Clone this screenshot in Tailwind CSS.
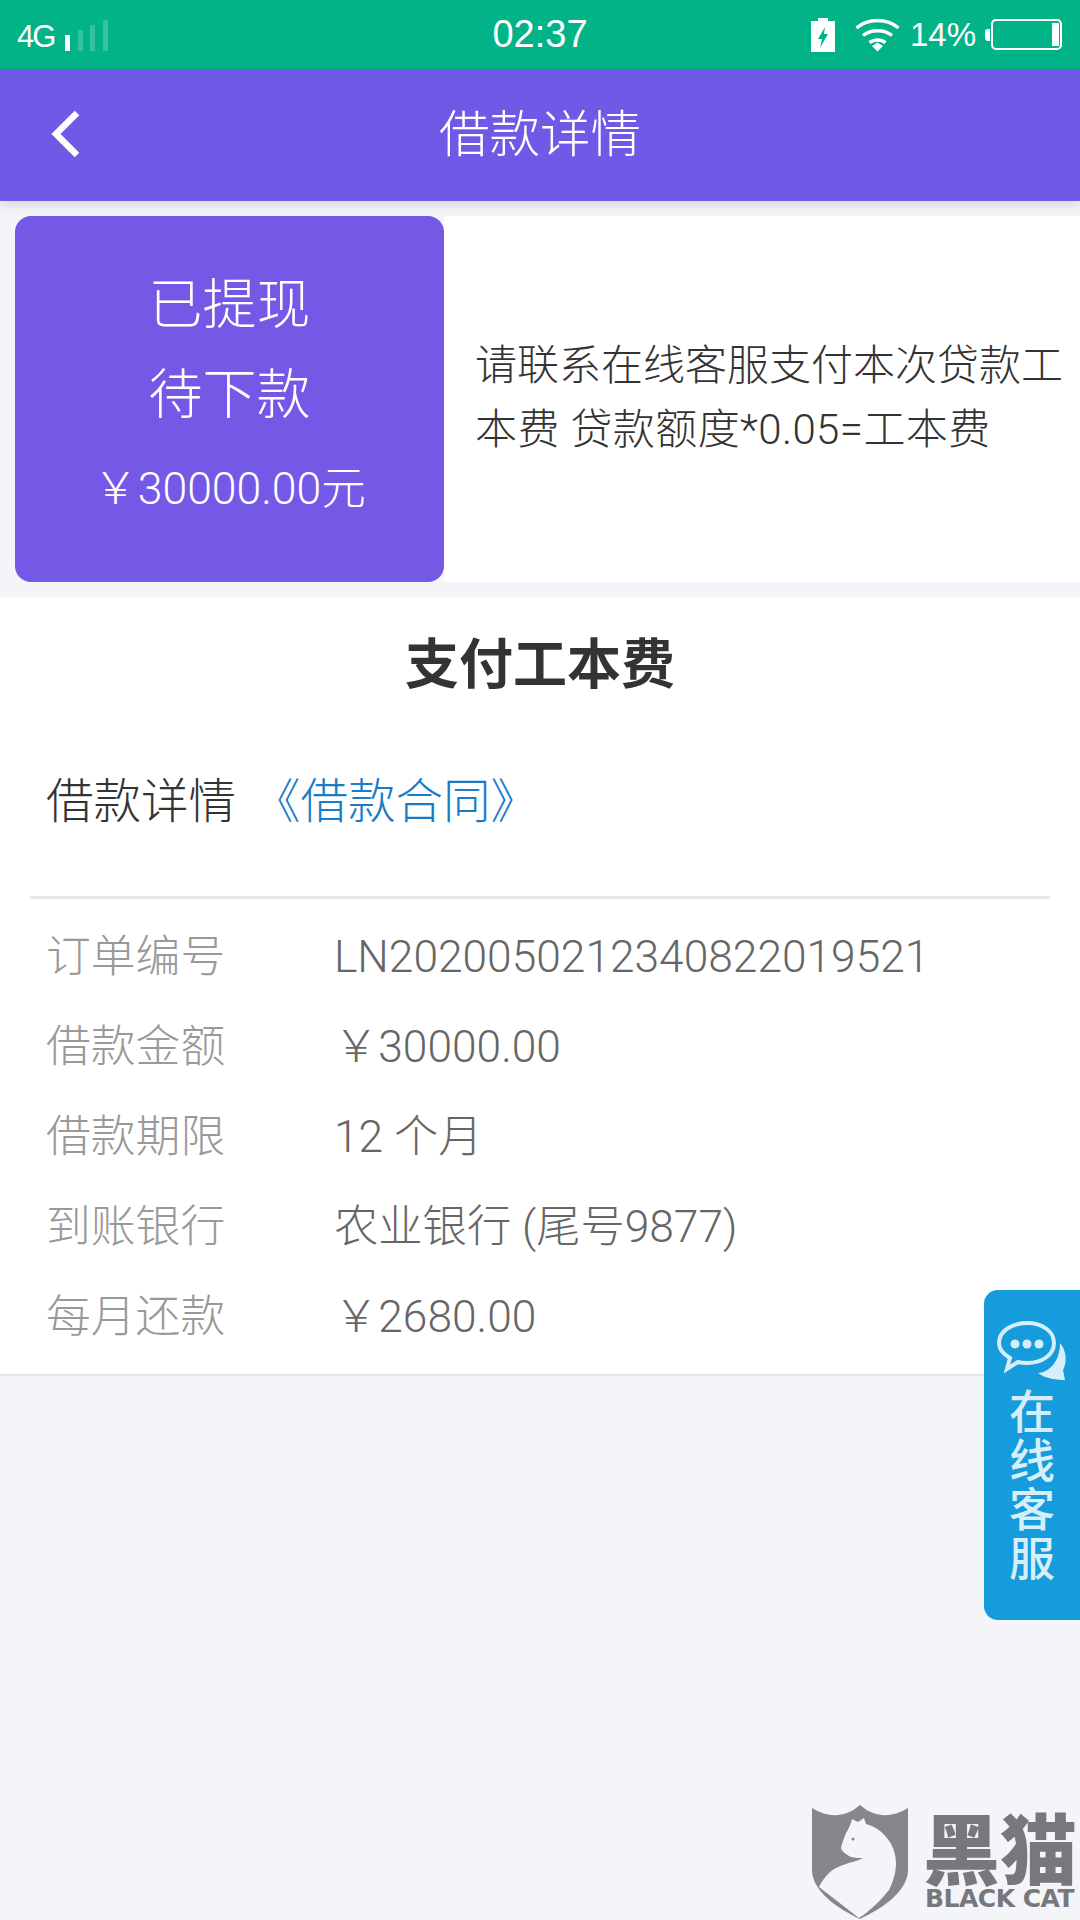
<!DOCTYPE html>
<html lang="zh-CN">
<head>
<meta charset="UTF-8" />
<title>借款详情</title>
<script src="https://cdn.jsdelivr.net/npm/@tailwindcss/browser@4"></script>
</head>
<body class="bg-[#f3f5f9]">
<div class="relative w-[1080px] h-[1920px] overflow-hidden bg-[#f3f5f9] font-['Roboto','Noto_Sans_CJK_SC',sans-serif]">

  <!-- status bar -->
  <div class="h-[69px] bg-[#02b388] flex items-center justify-between text-white relative font-['Liberation_Sans',sans-serif]">
    <div class="flex items-end pl-[17px] gap-[11px] pt-[4px]">
      <span class="text-[31px] leading-[34px] tracking-[-2px]">4G</span>
      <div class="flex items-end gap-[7.5px] mb-[3px]">
        <div class="w-[5px] h-[16px] bg-white"></div>
        <div class="w-[5px] h-[21px] bg-white/20"></div>
        <div class="w-[5px] h-[26px] bg-white/20"></div>
        <div class="w-[5px] h-[31px] bg-white/20"></div>
      </div>
    </div>
    <div class="absolute left-0 right-0 text-center text-[38px] leading-[73px]">02:37</div>
    <div class="flex items-center pr-[18px]">
      <svg width="24" height="34" viewBox="0 0 24 34"><path fill="#fff" fill-rule="evenodd" d="M7 0h10v3h7v31H0V3h7zM14 9l-7 12h4l-2 9 8-14h-4z"/></svg>
      <svg class="ml-[20px]" width="45" height="35" viewBox="0 0 45 35" fill="none" stroke="#fff" stroke-width="3.5"><path d="M1.500 11C13 1 32 1 43.500 11"/><path d="M8 18.500c8-6.500 21-6.500 29 0"/><path d="M14.500 25.500c4.500-3.500 11.500-3.500 16 0"/><path fill="#fff" stroke="none" d="M17 29l5.500-3.500 5.500 3.500-5.500 5.500z"/></svg>
      <span class="ml-[10px] text-[33px] leading-[38px]">14%</span>
      <div class="ml-[9px] w-[5px] h-[12px] bg-white rounded-l-[3px]"></div>
      <div class="ml-[1px] w-[71px] h-[31px] border-[2px] border-white rounded-[5px] flex justify-end items-center pr-[1px]">
        <div class="w-[7px] h-[23px] bg-white"></div>
      </div>
    </div>
  </div>

  <!-- nav -->
  <div class="relative h-[132px] bg-[#7159e8] flex items-center justify-center shadow-[0_4px_12px_rgba(0,0,0,0.13)]">
    <svg class="absolute left-[50px] top-[41px]" width="32" height="48" viewBox="0 0 32 48" fill="none" stroke="#fff" stroke-width="6.5"><path d="M27 3L6 24l21 21"/></svg>
    <span class="text-white text-[50.5px] leading-[60px] font-light">借款详情</span>
  </div>

  <!-- status card -->
  <div class="mt-[15px] pl-[15px] flex h-[366px]">
    <div class="w-[429px] bg-[#7459e6] rounded-[16px] text-white text-center flex flex-col items-center pt-[58px] font-light">
      <p class="text-[54px] leading-[64px]">已提现</p>
      <p class="text-[54px] leading-[64px] mt-[26px]">待下款</p>
      <p class="text-[44.5px] leading-[50px] mt-[36px]">￥30000.00元</p>
    </div>
    <div class="flex-1 bg-white flex flex-col justify-center pl-[31px] pb-[3px] text-[42px] leading-[64px] text-[#333] font-light">
      <p class="whitespace-nowrap">请联系在线客服支付本次贷款工</p>
      <p class="whitespace-nowrap tracking-[0.4px]">本费 贷款额度*0.05=工本费</p>
    </div>
  </div>

  <!-- details -->
  <div class="mt-[15px] h-[779px] bg-white border-b-[2px] border-[#e4e6e8]">
    <h2 class="pt-[38px] text-center text-[54px] leading-[62px] font-bold text-[#333]">支付工本费</h2>
    <div class="mt-[75px] pl-[46px] flex items-center text-[47.500px] leading-[60px] font-light">
      <span class="text-[#333]">借款详情</span>
      <a class="ml-[17px] text-[#1a7cc8]">《借款合同》</a>
    </div>
    <div class="mx-[30px] mt-[64px] h-[3px] bg-[#e6e8ea]"></div>
    <div class="mt-[13px] pl-[46px] text-[44.8px] leading-[90px] font-light">
      <div class="flex"><span class="w-[288px] text-[#999]">订单编号</span><span class="text-[44.3px] text-[#666]">LN2020050212340822019521</span></div>
      <div class="flex"><span class="w-[288px] text-[#999]">借款金额</span><span class="text-[44.3px] text-[#666]">￥30000.00</span></div>
      <div class="flex"><span class="w-[288px] text-[#999]">借款期限</span><span class="text-[44.3px] text-[#666]">12 个月</span></div>
      <div class="flex"><span class="w-[288px] text-[#999]">到账银行</span><span class="text-[44.3px] text-[#666]">农业银行 (尾号9877)</span></div>
      <div class="flex"><span class="w-[288px] text-[#999]">每月还款</span><span class="text-[44.3px] text-[#666]">￥2680.00</span></div>
    </div>
  </div>

  <!-- floating customer service -->
  <div class="absolute left-[984px] top-[1290px] w-[96px] h-[330px] bg-[#169bdc] rounded-l-[14px] flex flex-col items-center pt-[30px] text-[#d5eefa]">
    <svg class="ml-[2px]" width="72" height="62" viewBox="0 0 72 62">
      <path fill="none" stroke="#d5eefa" stroke-width="4" d="M30 3c15 0 27 8 27 20s-12 20-27 20c-3 0-6 0-9 -1l-11 7 3-11C6 34 2 29 2 23 2 11 15 3 30 3z"/>
      <circle cx="18" cy="24" r="4.500" fill="#d5eefa"/><circle cx="30" cy="24" r="4.500" fill="#d5eefa"/><circle cx="42" cy="24" r="4.500" fill="#d5eefa"/>
      <path fill="#d5eefa" d="M63 23c7 8 7 20 3 27l2 10c-8 0-19-1-27-7 12-1 22-12 22-30z"/>
    </svg>
    <div class="mt-[6px] text-[46px] leading-[49px] text-center font-medium w-[50px]">在线客服</div>
  </div>

  <!-- watermark -->
  <div class="absolute left-[811px] top-[1805px] flex">
    <svg width="98" height="114" viewBox="0 0 98 114">
      <path fill="#86878a" d="M1 3c18 11 34 9 48-3 14 12 30 14 48 3v62c0 20-24 38-48 49C25 103 1 85 1 65z"/>
      <path fill="#f3f5f9" d="M41 14l6 3 6-4 2 6c16 4 30 20 30 39 0 10-3 19-7 27-8 10-18 20-30 28L8 82c3-6 6-10 10-14 4-4 9-6 14-8 8-3 15-4 20-7-4 0-8 0-12-1-4-2-9-5-10-9 1-5 3-10 5-15 3-5 5-9 6-14z"/>
      <circle cx="42" cy="34" r="1.500" fill="#86878a"/>
    </svg>
    <div class="ml-[14px] text-[#77787b] font-['Noto_Sans_CJK_SC',sans-serif]">
      <div class="text-[77px] leading-[82px] font-black whitespace-nowrap">黑猫</div>
      <div class="ml-[2px] text-[25px] leading-[24px] font-bold whitespace-nowrap font-['DejaVu_Sans',sans-serif] tracking-[-0.5px]">BLACK CAT</div>
    </div>
  </div>
</div>
</body>
</html>
